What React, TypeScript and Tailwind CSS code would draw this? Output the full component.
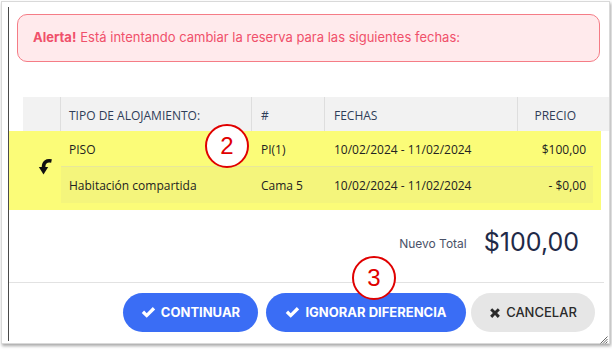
import React from 'react';

const poppins = { fontFamily: 'Inter, "Noto Sans", sans-serif' };

const Check = () => (
  <svg viewBox="0 0 16 16" className="w-[15px] h-[15px] fill-current">
    <path d="M0.8 8.4 L3.3 5.9 L6.1 8.7 L12.6 2.2 L15.1 4.7 L6.1 13.7 Z" />
  </svg>
);

const Times = () => (
  <svg viewBox="0 0 16 16" className="w-[12px] h-[12px] fill-current">
    <path d="M1.5 4.3 L4.3 1.5 L8 5.2 L11.7 1.5 L14.5 4.3 L10.8 8 L14.5 11.7 L11.7 14.5 L8 10.8 L4.3 14.5 L1.5 11.7 L5.2 8 Z" />
  </svg>
);

const CurvedArrow = () => (
  <svg viewBox="0 0 14 17" className="w-[14px] h-[17px]">
    <path d="M13.5 3 C8.5 2 5.5 4 5.5 9.5" stroke="#111" strokeWidth="3.6" fill="none" />
    <path d="M0.8 9 L10.2 9 L5.5 16.5 Z" fill="#111" />
  </svg>
);

const Circle: React.FC<{ n: string; className: string }> = ({ n, className }) => (
  <div
    className={`absolute w-[44px] h-[44px] rounded-full border-[2.5px] border-[#e00000] bg-white flex items-center justify-center text-[#e00000] text-[24px] ${className}`}
    style={{ fontFamily: '"Liberation Sans", Arial, sans-serif' }}
  >
    {n}
  </div>
);

const cols = 'grid grid-cols-[38px_191px_73px_193px_75px]';

const App: React.FC = () => {
  return (
    <div className="w-[612px] h-[350px] bg-white relative overflow-hidden">
      <div className="ml-px mt-px w-[609px] h-[343px] border border-[#d9d9d9] bg-white shadow-[1px_2px_3px_rgba(0,0,0,0.35)] pt-[5px]">
        <div className="ml-[6px] h-[334px] border-l-[1.5px] border-[#4a4a4a] relative pt-[7px]">
          {/* alert */}
          <div
            className="ml-[8px] w-[583px] h-[48px] rounded-[10px] border border-[#f57c86] bg-[#ffeaec] flex items-center px-[15px] text-[13px] text-[#f0506a]"
            style={poppins}
          >
            <span className="font-bold">Alerta!</span>
            <span className="ml-[4px]">Está intentando cambiar la reserva para las siguientes fechas:</span>
          </div>

          {/* table */}
          <div className="mt-[35px] text-[12px]" style={{ fontFamily: '"Open Sans", "Noto Sans", sans-serif' }}>
            <div className={`${cols} ml-[14px] h-[34px] bg-[#f2f2f2] text-[#2f3d58] pt-[3px]`}>
              <div className="border-r border-[#dedede] -mt-[3px]" />
              <div className="border-r border-[#dedede] -mt-[3px] flex items-center pl-[8px] pt-[3px]">TIPO DE ALOJAMIENTO:</div>
              <div className="border-r border-[#dedede] -mt-[3px] flex items-center pl-[9px] pt-[3px]">#</div>
              <div className="border-r border-[#dedede] -mt-[3px] flex items-center pl-[9px] pt-[3px]">FECHAS</div>
              <div className="flex items-center justify-end pr-[17px]">PRECIO</div>
            </div>
            <div className="bg-[#fbfc78] pl-[14px] pr-[8px] pb-[7px] w-[592px] text-[#222]">
              <div className="flex">
                <div className="w-[38px] flex items-center justify-center pl-[6px] -mt-[2px]">
                  <CurvedArrow />
                </div>
                <div className="flex flex-col">
                  <div className="grid grid-cols-[191px_73px_193px_75px] h-[36px] items-center border-b border-[#e8e89a] pt-[2px]">
                    <div className="pl-[8px]">PISO</div>
                    <div className="pl-[9px]">PI(1)</div>
                    <div className="pl-[9px]">10/02/2024 - 11/02/2024</div>
                    <div className="text-right pr-[7px]">$100,00</div>
                  </div>
                  <div className="grid grid-cols-[191px_73px_193px_75px] h-[36px] items-center bg-[#f4f57c] pt-[2px]">
                    <div className="pl-[8px]">Habitación compartida</div>
                    <div className="pl-[9px]">Cama 5</div>
                    <div className="pl-[9px]">10/02/2024 - 11/02/2024</div>
                    <div className="text-right pr-[7px]">- $0,00</div>
                  </div>
                </div>
              </div>
            </div>
          </div>

          {/* total */}
          <div className="mt-[18px] h-[28px] flex items-end justify-end pr-[30px]" style={poppins}>
            <span className="text-[12px] text-[#4a5268] mb-[3px]">Nuevo Total</span>
            <span className="ml-[17px] text-[25px] leading-[28px] text-[#1f2a48]">$100,00</span>
          </div>

          <div className="mt-[26px] w-[595px] border-t border-[#e2e2e2]" />

          {/* buttons */}
          <div className="mt-[10px] flex justify-end gap-[8px] pr-[14px] text-[13px] font-bold" style={poppins}>
            <button className="w-[135px] h-[39px] rounded-full bg-[#3a6df5] text-white flex items-center justify-center gap-[5px]">
              <Check />
              CONTINUAR
            </button>
            <button className="w-[200px] h-[39px] rounded-full bg-[#3a6df5] text-white flex items-center justify-center gap-[5px]">
              <Check />
              IGNORAR DIFERENCIA
            </button>
            <button className="w-[124px] h-[39px] rounded-full bg-[#e6e6e6] text-[#2a2a2a] font-medium flex items-center justify-center gap-[5px] -ml-[3px]">
              <Times />
              CANCELAR
            </button>
          </div>

          <Circle n="2" className="left-[196px] top-[117px]" />
          <Circle n="3" className="left-[343px] top-[249px]" />

          {/* resize grip */}
          <svg viewBox="0 0 8 8" className="absolute left-[591px] top-[329px] w-[8px] h-[8px]">
            <path d="M7.5 0.5 L0.5 7.5 M7.5 3 L3 7.5 M7.5 5.5 L5.5 7.5" stroke="#555" strokeWidth="0.9" />
          </svg>
        </div>
      </div>
    </div>
  );
};

export default App;
